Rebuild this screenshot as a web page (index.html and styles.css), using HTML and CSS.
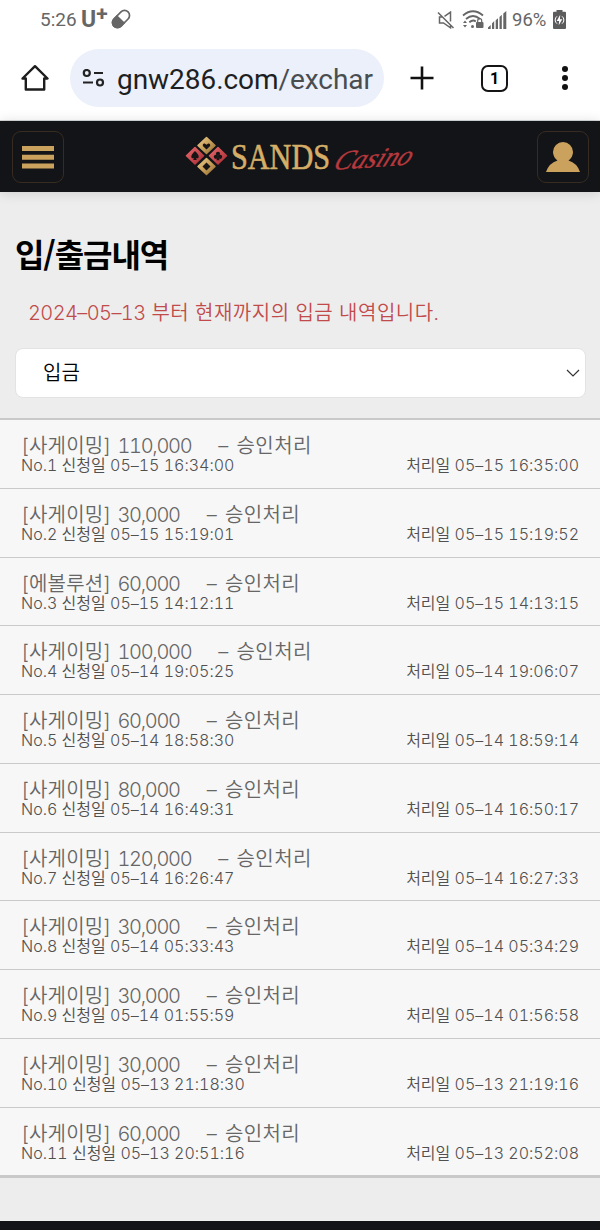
FILE: index.html
```
<!DOCTYPE html>
<html lang="ko">
<head>
    <meta charset="UTF-8">
    <meta name="viewport" content="width=device-width, initial-scale=1">
    <title>입/출금내역</title>
    <link rel="stylesheet" href="styles.css">
</head>
<body>
  <div class="status">
    <span class="clock">5:26</span>
    <span class="carrier">U<sup>+</sup></span>
    <svg class="pill" width="22" height="22" viewBox="0 0 22 22">
      <g transform="rotate(-45 11 11)">
        <rect x="1" y="6" width="20" height="10" rx="5" fill="none" stroke="#666" stroke-width="1.7"/>
        <path d="M11 5.2H6a5.800 5.800 0 0 0 0 11.600H11z" fill="#666"/>
      </g>
    </svg>
    <svg class="mute" width="18" height="18" viewBox="0 0 18 18" fill="none" stroke="#666" stroke-width="1.5">
      <path d="M1 1.5 16.5 17M5 6H2.5v6h4l7 4.8V14M7.5 5.3l6-4.2v9.5"/>
    </svg>
    <svg class="wifi" width="22" height="19" viewBox="0 0 22 19" fill="none" stroke="#666" stroke-width="1.8">
      <path d="M1 5.5q10-8.5 20 0M4 9q7-6 14 0M7.3 12.3q3.7-3.2 6.5-.8"/>
      <path d="M1 13h4l-2-2.4zM1 15h4l-2 2.4z" fill="#666" stroke="none"/>
      <circle cx="10.5" cy="16.4" r="1.5" fill="#666" stroke="none"/>
      <rect x="14" y="12" width="7.5" height="6" rx="1" fill="#666" stroke="none"/>
      <path d="M15.7 12v-1.3a2 2 0 0 1 4 0V12" stroke-width="1.2"/>
    </svg>
    <svg class="signal" width="19" height="18" viewBox="0 0 19 18" fill="#666">
      <path d="M0 18v-1.5L2.7 14v4zM4 18v-5.5L6.2 10v8zM7.7 18V9.3L10 7.2V18zM11.5 18V6l2.3-2.2V18zM15.3 18V2.6L18.3 0v18z"/>
    </svg>
    <span class="percent">96%</span>
    <svg class="battery" width="13" height="19" viewBox="0 0 13 19">
      <path d="M3.5 0h6v1.8H12q1 0 1 1V18q0 1-1 1H1q-1 0-1-1V2.800q0-1 1-1h2.500z" fill="#5c5c5c"/>
      <path d="M7.200 4.800 3.700 11h2.400l-.4 4.300L9.300 9.200H6.900z" fill="#fff"/>
      <path d="M4 6.300a4.600 4.600 0 0 0 0 7.400M9 6.300a4.600 4.600 0 0 1 0 7.400" fill="none" stroke="#fff" stroke-width="1"/>
    </svg>
  </div>

  <div class="browser">
    <svg class="home" width="28" height="28" viewBox="0 0 28 28" fill="none" stroke="#1d1d1d" stroke-width="2.400" stroke-linejoin="round">
      <path d="M1.500 14.500 14 2.200l12.500 12.300H23.200V25.500H4.800V14.500z"/>
    </svg>
    <div class="address">
      <svg width="23" height="18" viewBox="0 0 23 18" fill="none" stroke="#222" stroke-width="2.200">
        <circle cx="4.800" cy="4" r="3"/><path d="M12 4h9M1 13.500h10"/><circle cx="18" cy="13.500" r="3"/>
      </svg>
      <span class="url">gnw286.com<span class="path">/exchar</span></span>
    </div>
    <svg class="plus" width="24" height="24" viewBox="0 0 24 24" stroke="#111" stroke-width="2.600"><path d="M12 .5v23M.5 12h23"/></svg>
    <div class="tabs">1</div>
    <svg class="dots" width="6" height="24" viewBox="0 0 6 24" fill="#111">
      <circle cx="3" cy="3" r="3"/><circle cx="3" cy="12" r="3"/><circle cx="3" cy="21" r="3"/>
    </svg>
  </div>

  <div class="header">
    <div class="btn">
      <svg width="34" height="24" viewBox="0 0 34 24" fill="#cba15e"><path d="M1 1h32v5H1zM1 9.700h32v5H1zM1 18.500h32v5H1z"/></svg>
    </div>
    <svg class="logo" width="232" height="44" viewBox="0 0 232 44">
      <defs>
        <linearGradient id="gold" x1="0" y1="0" x2="1" y2="1">
          <stop offset="0" stop-color="#e9cb8c"/><stop offset=".5" stop-color="#c99f58"/><stop offset="1" stop-color="#8f6a34"/>
        </linearGradient>
        <linearGradient id="red" x1="0" y1="0" x2="1" y2="1">
          <stop offset="0" stop-color="#e9696c"/><stop offset="1" stop-color="#a52c33"/>
        </linearGradient>
      </defs>
      <g stroke-linejoin="round" stroke-width="1.500">
        <path d="M21.500 2.500 30 10.500l-8.500 8L13 10.500z" fill="url(#gold)" stroke="url(#gold)"/>
        <path d="M21.500 23.500 30 31.500l-8.500 8-8.500-8z" fill="url(#gold)" stroke="url(#gold)"/>
        <path d="M10 12.500 18.500 20.800 10 29 1.500 20.800z" fill="url(#red)" stroke="url(#red)"/>
        <path d="M33 12.500 41.500 20.800 33 29 24.500 20.800z" fill="url(#red)" stroke="url(#red)"/>
      </g>
      <g fill="#171416">
        <path d="M21.500 14.500 17.900 11q-.6-2.800 1.900-2.500l1.700 1.300 1.700-1.300q2.500-.3 1.900 2.500z"/>
        <path d="M21.500 27.500 25.500 31.500l-4 4-4-4z"/>
        <path d="M10 16q4.500 4 3.600 6.500-1.300 1.500-2.600.4l.8 2.200H8.200l.8-2.200q-1.300 1.100-2.600-.4-.9-2.500 3.600-6.500z"/>
        <circle cx="33" cy="18.800" r="2.100"/><circle cx="30.900" cy="21.800" r="2.100"/><circle cx="35.100" cy="21.800" r="2.100"/><path d="m33 20.500 1.600 4.800h-3.200z"/>
      </g>
      <text class="sands" x="46" y="33.500" textLength="99" lengthAdjust="spacingAndGlyphs">SANDS</text>
      <text class="casino" transform="translate(147 35) rotate(-4) skewX(-28)" textLength="77" lengthAdjust="spacingAndGlyphs">Casino</text>
    </svg>
    <div class="btn">
      <svg width="36" height="32" viewBox="0 0 36 32" fill="#cba15e"><path d="M1 31q3-9 11.500-11.500Q8 16 8 11a10 10 0 0 1 20 0q0 5-4.500 8.500Q32 22 35 31z"/></svg>
    </div>
  </div>

  <div class="content">
    <h1>입/출금내역</h1>
    <p class="notice"><span class="day">2024–05–13</span> 부터 현재까지의 입금 내역입니다.</p>
    <div class="select">
      <span>입금</span>
      <svg width="14" height="8" viewBox="0 0 14 8" fill="none" stroke="#333" stroke-width="1.200"><path d="m1 1 6 6 6-6"/></svg>
    </div>
  </div>

  <ul class="list">
    <li>
      <p class="amount"><span>[사게이밍]</span><span class="num">110,000</span><span class="state">– 승인처리</span></p>
      <p class="date"><span>No.1 신청일 05–15 16:34:00</span><span>처리일 05–15 16:35:00</span></p>
    </li>
    <li>
      <p class="amount"><span>[사게이밍]</span><span class="num">30,000</span><span class="state">– 승인처리</span></p>
      <p class="date"><span>No.2 신청일 05–15 15:19:01</span><span>처리일 05–15 15:19:52</span></p>
    </li>
    <li>
      <p class="amount"><span>[에볼루션]</span><span class="num">60,000</span><span class="state">– 승인처리</span></p>
      <p class="date"><span>No.3 신청일 05–15 14:12:11</span><span>처리일 05–15 14:13:15</span></p>
    </li>
    <li>
      <p class="amount"><span>[사게이밍]</span><span class="num">100,000</span><span class="state">– 승인처리</span></p>
      <p class="date"><span>No.4 신청일 05–14 19:05:25</span><span>처리일 05–14 19:06:07</span></p>
    </li>
    <li>
      <p class="amount"><span>[사게이밍]</span><span class="num">60,000</span><span class="state">– 승인처리</span></p>
      <p class="date"><span>No.5 신청일 05–14 18:58:30</span><span>처리일 05–14 18:59:14</span></p>
    </li>
    <li>
      <p class="amount"><span>[사게이밍]</span><span class="num">80,000</span><span class="state">– 승인처리</span></p>
      <p class="date"><span>No.6 신청일 05–14 16:49:31</span><span>처리일 05–14 16:50:17</span></p>
    </li>
    <li>
      <p class="amount"><span>[사게이밍]</span><span class="num">120,000</span><span class="state">– 승인처리</span></p>
      <p class="date"><span>No.7 신청일 05–14 16:26:47</span><span>처리일 05–14 16:27:33</span></p>
    </li>
    <li>
      <p class="amount"><span>[사게이밍]</span><span class="num">30,000</span><span class="state">– 승인처리</span></p>
      <p class="date"><span>No.8 신청일 05–14 05:33:43</span><span>처리일 05–14 05:34:29</span></p>
    </li>
    <li>
      <p class="amount"><span>[사게이밍]</span><span class="num">30,000</span><span class="state">– 승인처리</span></p>
      <p class="date"><span>No.9 신청일 05–14 01:55:59</span><span>처리일 05–14 01:56:58</span></p>
    </li>
    <li>
      <p class="amount"><span>[사게이밍]</span><span class="num">30,000</span><span class="state">– 승인처리</span></p>
      <p class="date"><span>No.10 신청일 05–13 21:18:30</span><span>처리일 05–13 21:19:16</span></p>
    </li>
    <li>
      <p class="amount"><span>[사게이밍]</span><span class="num">60,000</span><span class="state">– 승인처리</span></p>
      <p class="date"><span>No.11 신청일 05–13 20:51:16</span><span>처리일 05–13 20:52:08</span></p>
    </li>
  </ul>
  <div class="footer"></div>
</body>
</html>
```

FILE: styles.css
```
* {
	box-sizing: border-box;
}
body {
	margin: 0;
	width: 600px;
	height: 1230px;
	overflow: hidden;
	display: flex;
	flex-direction: column;
	background-color: #ededed;
	font-family: Inter, "Noto Sans CJK KR", sans-serif;
	font-weight: 350;
	font-variant-numeric: tabular-nums;
}
svg {
	display: block;
	flex: none;
}
p, h1, ul {
	margin: 0;
	padding: 0;
}

/* phone status bar */
.status {
	flex: none;
	height: 39px;
	padding: 0 34px 0 40px;
	display: flex;
	align-items: center;
	background-color: #fff;
	color: #666;
	font-family: Roboto, sans-serif;
	font-weight: 400;
	font-size: 19px;
}
.clock {
	width: 41px;
}
.carrier {
	width: 29px;
	font-size: 23px;
	font-weight: 700;
	line-height: 30px;
	white-space: nowrap;
}
.carrier sup {
	font-size: 21px;
	line-height: 0;
	vertical-align: 6px;
}
.pill {
	margin-bottom: 1px;
}
.mute {
	margin-left: auto;
	margin-right: 7px;
}
.wifi {
	margin-right: 4px;
}
.signal {
	margin-right: 5px;
}
.percent {
	width: 41px;
	font-size: 18.5px;
}

/* browser bar */
.browser {
	flex: none;
	height: 82px;
	padding: 10px 32px 13px 21px;
	display: flex;
	align-items: center;
	background-color: #fff;
	border-bottom: 1px solid #d5d8d8;
}
.address {
	width: 314px;
	height: 58px;
	margin-left: 21px;
	padding-left: 12px;
	display: flex;
	align-items: center;
	border-radius: 29px;
	background-color: #ebf0fa;
}
.url {
	margin-left: 12px;
	padding-top: 3px;
	font-family: Roboto, sans-serif;
	font-weight: 400;
	font-size: 28px;
	letter-spacing: -0.05px;
	line-height: 55px;
	color: #1e1f22;
}
.path {
	color: #4a4d50;
}
.plus {
	margin-left: 26px;
}
.tabs {
	width: 27px;
	height: 27px;
	margin-left: 47px;
	border: 2.500px solid #151515;
	border-radius: 7px;
	font: 700 16px/23px Roboto, sans-serif;
	text-align: center;
}
.dots {
	margin-left: auto;
}

/* site header */
.header {
	flex: none;
	height: 71px;
	padding: 1px 11px 0 12px;
	display: flex;
	align-items: center;
	justify-content: space-between;
	background-color: #121417;
	box-shadow: 0 1px 12px rgba(0, 0, 0, 0.14);
}
.btn {
	width: 52px;
	height: 52px;
	display: flex;
	align-items: center;
	justify-content: center;
	border: 1px solid #382c20;
	border-radius: 9px;
}
.sands {
	font-family: "Liberation Serif", serif;
	font-size: 36px;
	font-weight: 400;
	fill: #d5ae67;
	stroke: #d5ae67;
	stroke-width: 0.6px;
}
.casino {
	font-family: "Liberation Serif", serif;
	font-style: italic;
	font-size: 27px;
	fill: #b8393e;
	stroke: #b8393e;
	stroke-width: 0.4px;
}

.content {
	flex: none;
	height: 226px;
	padding: 40px 14px 0 15px;
}
h1 {
	height: 42px;
	font-family: "Noto Sans CJK KR", sans-serif;
	font-size: 32px;
	font-weight: 700;
	line-height: 42px;
	letter-spacing: -1.1px;
	color: #000;
}
.notice {
	margin-top: 23px;
	padding-left: 13px;
	font-size: 20px;
	line-height: 32px;
	letter-spacing: 0.5px;
	color: #c14b4b;
	white-space: nowrap;
}
.day {
	letter-spacing: -0.6px;
}
.select {
	height: 50px;
	margin-top: 19px;
	padding: 0 5px 0 27px;
	display: flex;
	align-items: center;
	justify-content: space-between;
	background-color: #fff;
	border: 1px solid #e3e3e3;
	border-radius: 8px;
	font-size: 20px;
	color: #000;
}
.select span {
	padding-bottom: 3px;
}

.list {
	flex: none;
	list-style: none;
	height: 760px;
	border-top: 2px solid #c9c9c9;
	border-bottom: 2px solid #c9c9c9;
	background-color: #f7f7f7;
}
.list li {
	height: 68.75px;
	padding: 16px 21px 0 21px;
	border-bottom: 1px solid #cacaca;
}
.amount {
	display: flex;
	font-size: 20px;
	line-height: 21px;
	letter-spacing: 0.2px;
	color: #666;
	white-space: nowrap;
}
.num {
	margin-left: 6px;
	letter-spacing: -1.3px;
}
.state {
	margin-left: 27px;
	letter-spacing: 0.4px;
	word-spacing: 2px;
}
.date {
	display: flex;
	justify-content: space-between;
	font-size: 16px;
	line-height: 16px;
	color: #505050;
	white-space: nowrap;
}
.footer {
	height: 9px;
	margin-top: auto;
	background-color: #121417;
}
```
